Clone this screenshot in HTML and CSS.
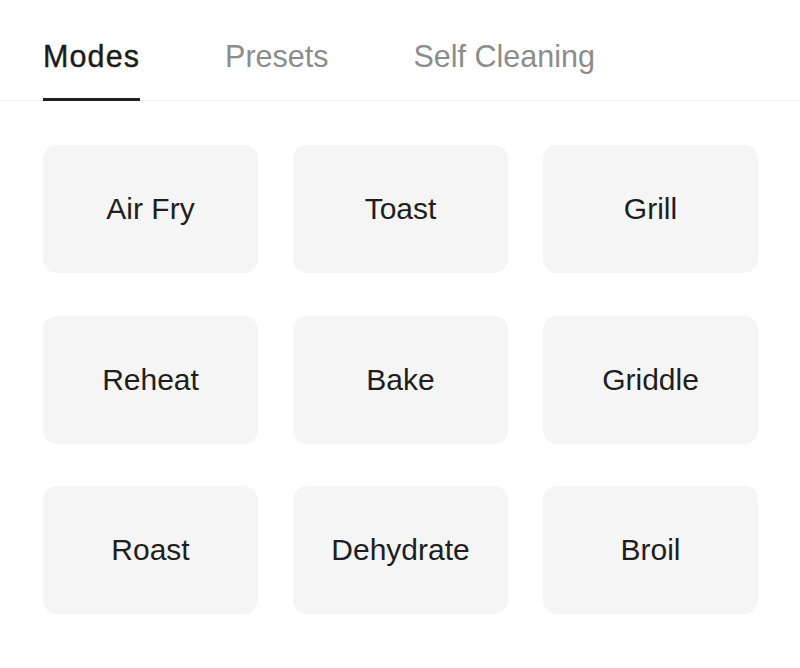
FILE: index.html
```html
<!DOCTYPE html>
<html lang="en">
<head>
<meta charset="utf-8">
<title>Modes</title>
<link rel="stylesheet" href="styles.css">
</head>
<body>
<nav class="tabs">
  <div class="tab active">Modes</div>
  <div class="tab">Presets</div>
  <div class="tab">Self Cleaning</div>
</nav>
<main class="grid">
  <div class="card">Air Fry</div>
  <div class="card">Toast</div>
  <div class="card">Grill</div>
  <div class="card">Reheat</div>
  <div class="card">Bake</div>
  <div class="card">Griddle</div>
  <div class="card">Roast</div>
  <div class="card">Dehydrate</div>
  <div class="card">Broil</div>
</main>
</body>
</html>
```
FILE: styles.css
```css
html, body {
  margin: 0;
  padding: 0;
  background: #ffffff;
  font-family: "Liberation Sans", Arial, sans-serif;
}

.tabs {
  display: flex;
  gap: 85px;
  padding: 38px 0 0 43px;
  border-bottom: 1px solid #ececec;
}

.tab {
  font-size: 30.5px;
  line-height: 36px;
  color: #8c8c8c;
  padding-bottom: 24px;
  border-bottom: 3px solid transparent;
  margin-bottom: -1px;
}

.tab.active {
  color: #1c1c1c;
  border-bottom-color: #1f1f1f;
  -webkit-text-stroke: 0.4px #1c1c1c;
  letter-spacing: 1.1px;
}

.grid {
  display: grid;
  grid-template-columns: repeat(3, 215px);
  grid-auto-rows: 128px;
  column-gap: 35px;
  row-gap: 42.5px;
  padding: 44px 0 0 43px;
}

.card {
  background: #f5f5f5;
  border-radius: 14px;
  display: flex;
  align-items: center;
  justify-content: center;
  font-size: 30px;
  color: #1e1e1e;
}
```
